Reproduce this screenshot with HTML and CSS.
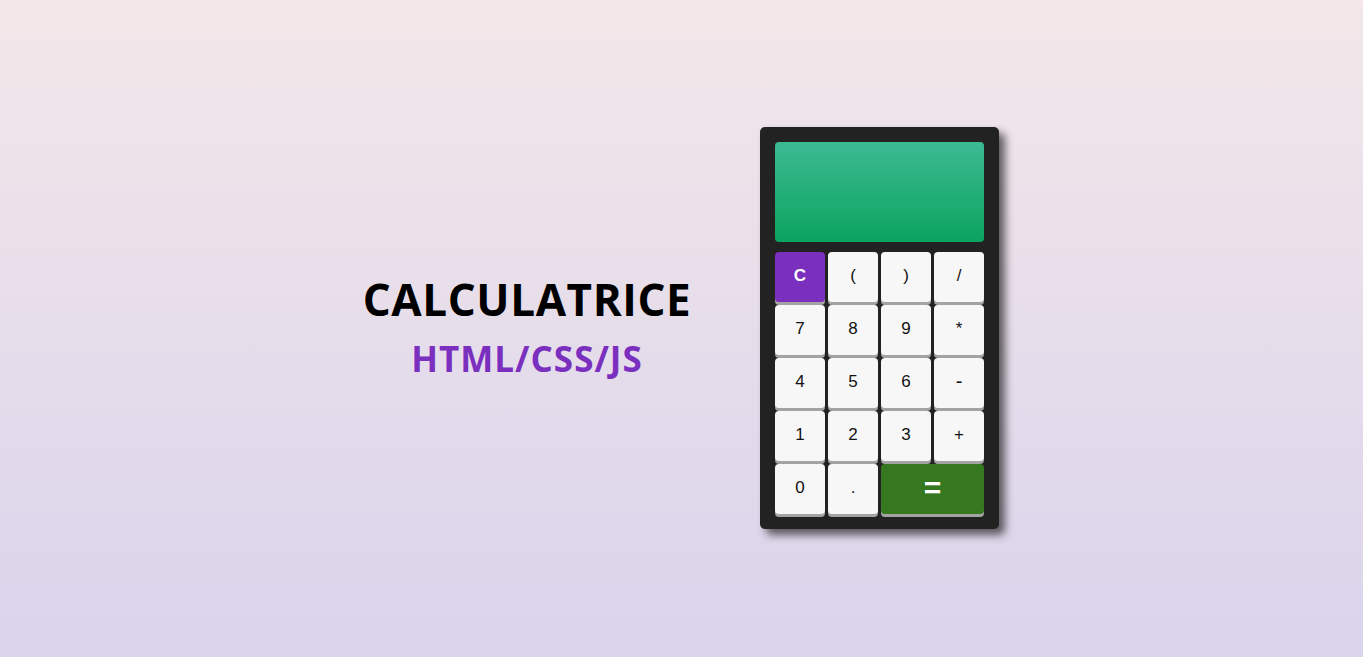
FILE: index.html
```html
<!DOCTYPE html>
<html lang="fr">
<head>
<meta charset="utf-8">
<title>Calculatrice</title>
<link rel="stylesheet" href="styles.css">
</head>
<body>
<main class="page">
  <div class="intro">
    <h1 class="title">CALCULATRICE</h1>
    <h2 class="subtitle">HTML/CSS/JS</h2>
  </div>
  <div class="calc">
    <div class="screen"></div>
    <div class="keys">
      <button class="key key-clear">C</button>
      <button class="key">(</button>
      <button class="key">)</button>
      <button class="key">/</button>
      <button class="key">7</button>
      <button class="key">8</button>
      <button class="key">9</button>
      <button class="key">*</button>
      <button class="key">4</button>
      <button class="key">5</button>
      <button class="key">6</button>
      <button class="key key-op">-</button>
      <button class="key">1</button>
      <button class="key">2</button>
      <button class="key">3</button>
      <button class="key">+</button>
      <button class="key">0</button>
      <button class="key">.</button>
      <button class="key key-equal">=</button>
    </div>
  </div>
</main>
</body>
</html>
```
FILE: styles.css
```css
* { box-sizing: border-box; }
html, body { height: 100%; }
body {
  margin: 0;
  background: linear-gradient(to top, #dad4ec 0%, #dad4ec 1%, #f3e7e9 100%);
  font-family: "Liberation Sans", Arial, sans-serif;
}
.page {
  height: 100%;
  display: flex;
  align-items: center;
  justify-content: center;
  gap: 70px;
}
.intro {
  width: 326px;
  display: flex;
  flex-direction: column;
  align-items: center;
  font-family: "Open Sans", sans-serif;
  margin-bottom: 3px;
}
.title {
  margin: 0 0 10px;
  font-size: 44px;
  font-weight: 700;
  letter-spacing: 0.6px;
  color: #000;
  line-height: 1.2;
  white-space: nowrap;
}
.subtitle {
  margin: 0;
  font-size: 35px;
  font-weight: 700;
  letter-spacing: 1px;
  color: #7b2fbe;
  line-height: 1.3;
  white-space: nowrap;
}
.calc {
  width: 239px;
  padding: 15px;
  margin-bottom: 1px;
  background: #222222;
  border-radius: 5px;
  box-shadow: 6px 6px 9px rgba(0, 0, 0, 0.6);
}
.screen {
  height: 100px;
  border-radius: 4px;
  background: linear-gradient(to top, #0ba360 0%, #3cba92 100%);
  margin-bottom: 10px;
}
.keys {
  display: grid;
  grid-template-columns: repeat(4, 50px);
  grid-auto-rows: 50px;
  gap: 3px;
}
.key {
  border: none;
  border-radius: 4px;
  background: #f7f7f7;
  color: #111;
  font-family: "Liberation Sans", Arial, sans-serif;
  font-size: 17px;
  box-shadow: 0 3px 0 #a3a3a3;
  padding: 0 0 3px;
}
.key-op { font-size: 20px; }
.key-clear {
  background: #7b2fbe;
  color: #fff;
  font-weight: 700;
  font-size: 17px;
}
.key-equal {
  grid-column: span 2;
  background: #35781f;
  color: #fff;
  font-size: 30px;
  font-weight: 700;
}
```
